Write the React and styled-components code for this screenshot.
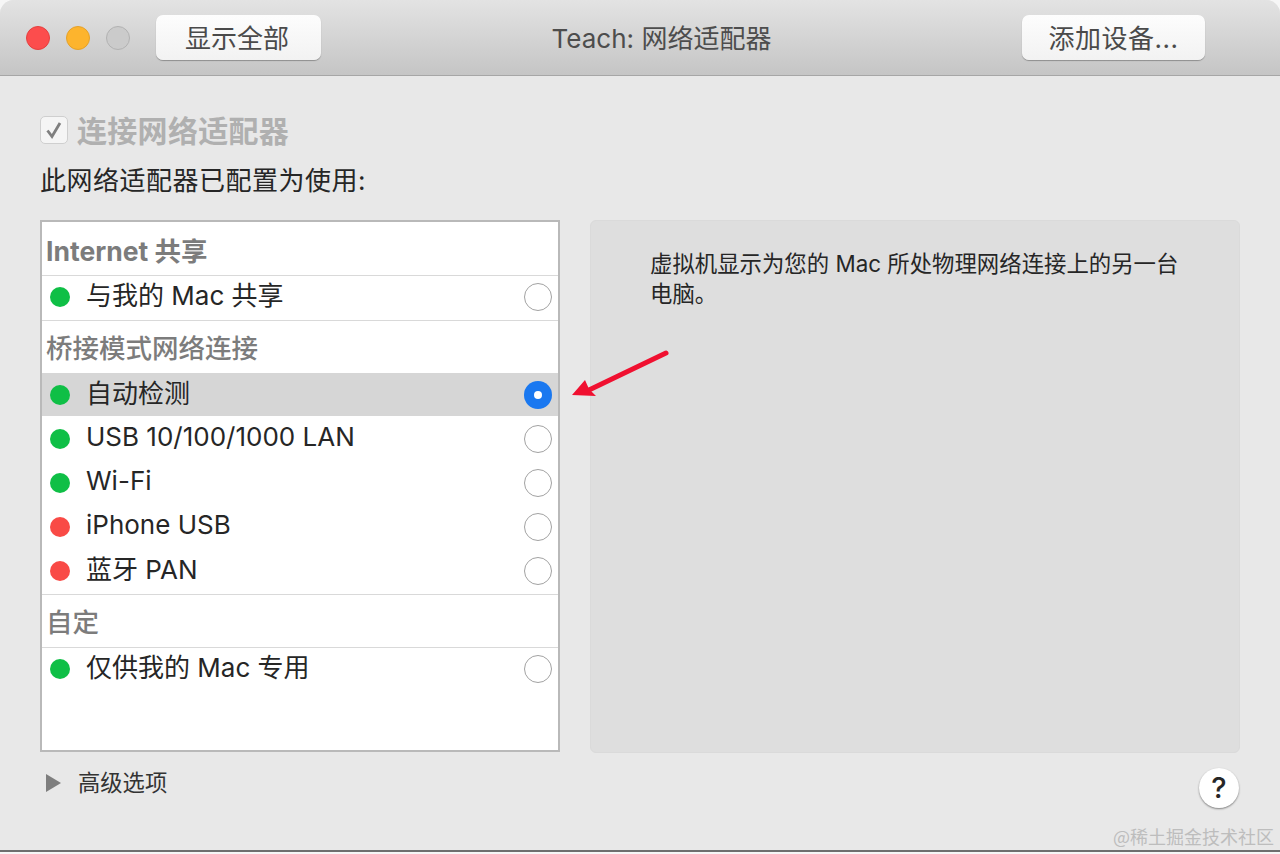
import React from 'react'
import styled, { createGlobalStyle } from 'styled-components'

const GlobalStyle = createGlobalStyle`
  html, body {
    margin: 0;
    padding: 0;
    background: #f4f4f4;
  }
  body {
    font-family: Inter, "Noto Sans CJK SC", sans-serif;
    color: #262626;
  }
`

const Page = styled.div`
  position: relative;
  width: 1280px;
  height: 854px;
  overflow: hidden;
  background: #f6f6f6;
`

const Window = styled.div`
  display: flex;
  flex-direction: column;
  height: 852px;
  box-sizing: border-box;
  border-bottom: 2px solid #6e6e6e;
  border-radius: 14px 14px 0 0;
  overflow: hidden;
  background: #e8e8e8;
`

const TitleBar = styled.div`
  display: flex;
  align-items: center;
  flex: none;
  box-sizing: border-box;
  height: 76px;
  padding: 0 75px 0 26px;
  background: linear-gradient(#e3e3e3, #c5c5c5);
  border-bottom: 1px solid #a6a6a6;
`

const Light = styled.div`
  width: 24px;
  height: 24px;
  margin-right: 16px;
  border-radius: 50%;
  box-sizing: border-box;
  background: ${p => p.$color};
  border: 1px solid ${p => p.$edge};
`

const ToolButton = styled.div`
  display: flex;
  align-items: center;
  justify-content: center;
  flex: none;
  box-sizing: border-box;
  width: ${p => p.$width}px;
  height: 45px;
  margin-left: ${p => p.$gap || 0}px;
  padding: 0 ${p => p.$nudge || 0}px 2px 0;
  border-radius: 7px;
  background: linear-gradient(#fdfdfd, #f2f2f2);
  box-shadow: 0 1px 1px rgba(0, 0, 0, 0.3);
  font-size: 26px;
  letter-spacing: ${p => p.$spread || 0}px;
  color: #4a4a4a;
`

const Title = styled.div`
  flex: 1;
  padding: 0 20px 2px 0;
  text-align: center;
  font-size: 26px;
  color: #4d4d4d;
`

const Content = styled.div`
  display: flex;
  flex-direction: column;
  flex: 1;
  padding: 0 40px;
`

const CheckRow = styled.div`
  display: flex;
  align-items: center;
  gap: 9px;
  height: 34px;
  margin-top: 37px;
`

const CheckBox = styled.div`
  display: flex;
  align-items: center;
  justify-content: center;
  box-sizing: border-box;
  width: 28px;
  height: 28px;
  border-radius: 5px;
  border: 1px solid #cfcfcf;
  background: #f5f5f5;
`

const CheckLabel = styled.div`
  position: relative;
  top: -1px;
  font-size: 30px;
  font-weight: 700;
  letter-spacing: 0.3px;
  color: #b0b0b0;
`

const Intro = styled.div`
  font-size: 26px;
  line-height: 34px;
  margin-top: 17px;
  letter-spacing: 0.5px;
  color: #262626;
`

const Columns = styled.div`
  display: flex;
  gap: 30px;
  margin-top: 22px;
`

const List = styled.div`
  box-sizing: border-box;
  width: 520px;
  height: 532px;
  padding-top: 8px;
  background: #fff;
  border: 2px solid #b9b9b9;
`

const GroupHeader = styled.div`
  display: flex;
  align-items: center;
  box-sizing: border-box;
  height: ${p => p.$height}px;
  padding-left: 4px;
  padding-bottom: ${p => p.$lift || 0}px;
  font-size: 26.5px;
  font-weight: ${p => (p.$bold ? 700 : 500)};
  color: #7c7c7c;
  border-bottom: ${p => (p.$line ? '1px solid #d9d9d9' : 'none')};
`

const Row = styled.div`
  display: flex;
  align-items: center;
  box-sizing: border-box;
  height: ${p => p.$height}px;
  padding: ${p => p.$drop || 0}px 6px ${p => p.$lift || 0}px 8px;
  background: ${p => (p.$selected ? '#d6d6d6' : 'transparent')};
  border-bottom: ${p => (p.$line ? '1px solid #d9d9d9' : 'none')};
`

const Dot = styled.span`
  flex: none;
  width: 20px;
  height: 20px;
  border-radius: 50%;
  background: ${p => (p.$on ? '#0fbf46' : '#f94a46')};
`

const RowLabel = styled.span`
  flex: 1;
  margin-left: 16px;
  font-size: 26px;
  color: #262626;
  position: relative;
  top: -${p => p.$up || 3}px;
`

const Radio = styled.span`
  display: flex;
  align-items: center;
  justify-content: center;
  flex: none;
  box-sizing: border-box;
  width: 28px;
  height: 28px;
  border-radius: 50%;
  background: ${p => (p.$on ? '#1a78f0' : '#fff')};
  border: ${p => (p.$on ? 'none' : '1px solid #a2a2a2')};
`

const RadioMark = styled.span`
  width: 8px;
  height: 8px;
  border-radius: 50%;
  background: #fff;
`

const InfoPanel = styled.div`
  box-sizing: border-box;
  width: 650px;
  height: 533px;
  padding: 28px 59px;
  border-radius: 6px;
  background: #dedede;
  border: 1px solid #dadada;
  font-size: 22.4px;
  line-height: 30px;
  color: #262626;
`

const Footer = styled.div`
  display: flex;
  align-items: center;
  margin-top: 6px;
  height: 44px;
`

const Disclosure = styled.div`
  width: 0;
  height: 0;
  margin-left: 6px;
  margin-top: 4px;
  border-left: 15px solid #7e7e7e;
  border-top: 9px solid transparent;
  border-bottom: 9px solid transparent;
`

const FooterLabel = styled.div`
  flex: 1;
  margin-left: 17px;
  font-size: 22.3px;
  color: #333;
`

const HelpButton = styled.div`
  display: flex;
  align-items: center;
  justify-content: center;
  box-sizing: border-box;
  width: 40px;
  height: 40px;
  margin: 13px 1px 0 0;
  border-radius: 50%;
  background: #fff;
  box-shadow: 0 1px 2px rgba(0, 0, 0, 0.45);
  font-size: 29px;
  font-weight: 500;
  color: #262626;
`

const Arrow = styled.svg`
  position: absolute;
  left: 570px;
  top: 348px;
`

const Watermark = styled.div`
  position: absolute;
  right: 6px;
  bottom: 6px;
  font-family: "Noto Sans CJK SC", serif;
  font-size: 18px;
  line-height: 24px;
  color: #bdbdbd;
`

const App = () => {
  return (
    <Page>
      <GlobalStyle />
      <Window>
        <TitleBar>
          <Light $color="#fc4d4d" $edge="#e5403f" />
          <Light $color="#fdb42d" $edge="#e5a129" />
          <Light $color="#cbcbcb" $edge="#b2b2b2" />
          <ToolButton $width={165} $gap={10} $nudge={3}>显示全部</ToolButton>
          <Title>Teach: 网络适配器</Title>
          <ToolButton $width={183} $spread={0.5}>添加设备...</ToolButton>
        </TitleBar>
        <Content>
          <CheckRow>
            <CheckBox>
              <svg width="20" height="20" viewBox="0 0 20 20">
                <path d="M3.5 10.5 L8 16.5 L16 3" fill="none" stroke="#7f7f7f" strokeWidth="2.8" />
              </svg>
            </CheckBox>
            <CheckLabel>连接网络适配器</CheckLabel>
          </CheckRow>
          <Intro>此网络适配器已配置为使用:</Intro>
          <Columns>
            <List>
              <GroupHeader $height={46} $bold $line $lift={7}>Internet 共享</GroupHeader>
              <Row $height={45} $line $lift={2}>
                <Dot $on /><RowLabel $up={4}>与我的 Mac 共享</RowLabel><Radio />
              </Row>
              <GroupHeader $height={52} $lift={2}>桥接模式网络连接</GroupHeader>
              <Row $height={43} $selected>
                <Dot $on /><RowLabel>自动检测</RowLabel><Radio $on><RadioMark /></Radio>
              </Row>
              <Row $height={44} $drop={2}>
                <Dot $on /><RowLabel>USB 10/100/1000 LAN</RowLabel><Radio />
              </Row>
              <Row $height={44} $drop={2}>
                <Dot $on /><RowLabel>Wi-Fi</RowLabel><Radio />
              </Row>
              <Row $height={44} $drop={2}>
                <Dot /><RowLabel>iPhone USB</RowLabel><Radio />
              </Row>
              <Row $height={47} $line $lift={1}>
                <Dot /><RowLabel>蓝牙 PAN</RowLabel><Radio />
              </Row>
              <GroupHeader $height={53} $line $lift={2}>自定</GroupHeader>
              <Row $height={44} $lift={2}>
                <Dot $on /><RowLabel $up={4}>仅供我的 Mac 专用</RowLabel><Radio />
              </Row>
            </List>
            <InfoPanel>
              虚拟机显示为您的 Mac 所处物理网络连接上的另一台
              <br />
              电脑。
            </InfoPanel>
          </Columns>
          <Footer>
            <Disclosure />
            <FooterLabel>高级选项</FooterLabel>
            <HelpButton>?</HelpButton>
          </Footer>
        </Content>
      </Window>
      <Arrow width="102" height="54" viewBox="0 0 102 54">
        <path d="M96 5 L19 42" stroke="#f01030" strokeWidth="5" strokeLinecap="round" fill="none" />
        <path d="M2 47 L15 32 L19 41 L26 48 Z" fill="#f01030" />
      </Arrow>
      <Watermark>@稀土掘金技术社区</Watermark>
    </Page>
  )
}

export default App
